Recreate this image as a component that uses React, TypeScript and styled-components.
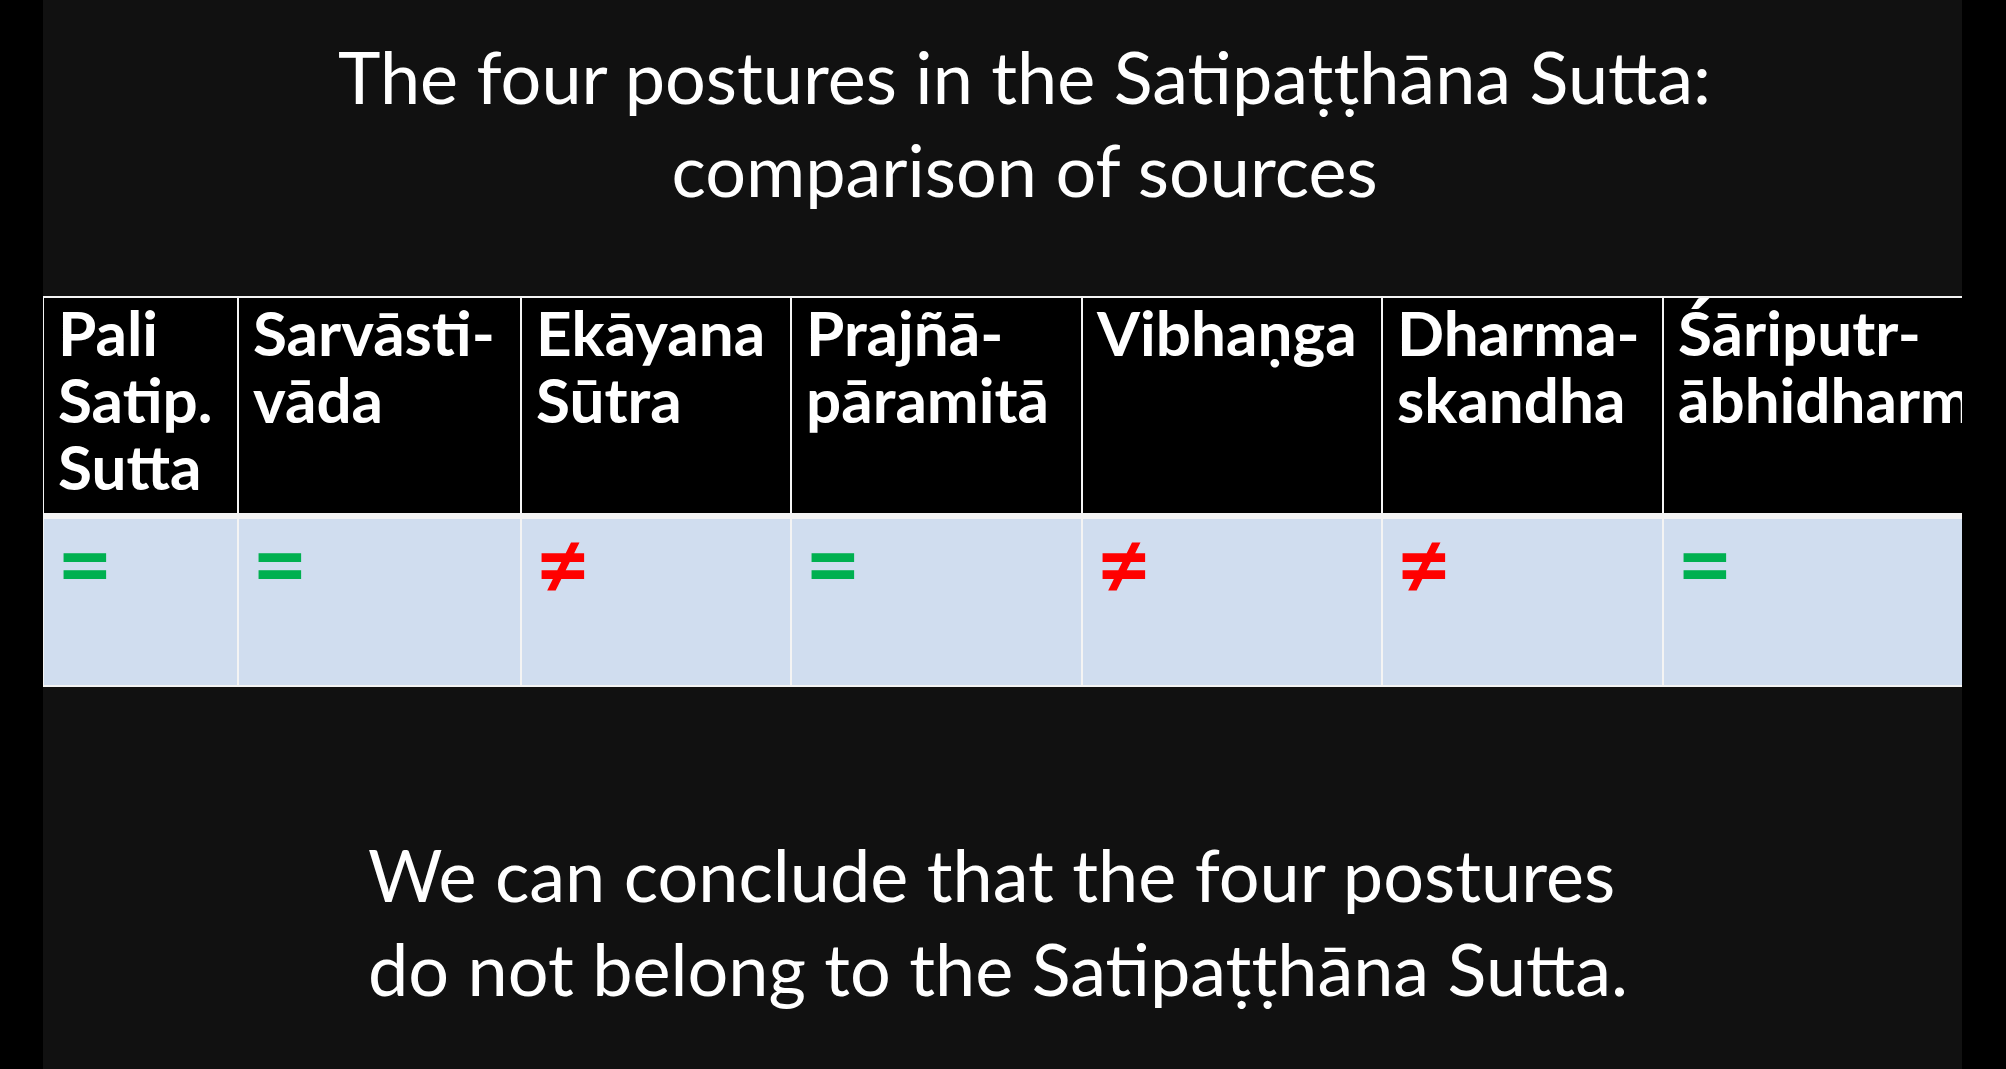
import React from "react";
import styled, { createGlobalStyle } from "styled-components";

const GlobalStyle = createGlobalStyle`
  html, body {
    margin: 0;
    padding: 0;
    background: #000000;
  }
  body {
    font-family: "Lato", "Liberation Sans", sans-serif;
  }
`;

const Screen = styled.div`
  display: flex;
  justify-content: flex-start;
  width: 2006px;
  height: 1069px;
  background: #000000;
  padding-left: 43px;
  box-sizing: border-box;
  overflow: hidden;
`;

const Slide = styled.main`
  display: flex;
  flex-direction: column;
  width: 1919px;
  height: 1069px;
  background: #111111;
  overflow: hidden;
  color: #ffffff;
`;

const Title = styled.h1`
  margin: 0;
  padding: 30px 0 0 44px;
  font-family: "Lato", "Liberation Sans", sans-serif;
  font-weight: 400;
  font-size: 72px;
  line-height: 93px;
  text-align: center;
  color: #ffffff;
`;

const Table = styled.div`
  display: grid;
  grid-template-columns: 193px 281px 268px 289px 298px 279px 340px;
  column-gap: 2px;
  row-gap: 6px;
  width: max-content;
  margin-top: 80px;
  padding: 2px 0 2px 1px;
  background: #f4f4f4;
`;

const HeadCell = styled.div`
  background: #000000;
  height: 215px;
  padding: 1px 10px 0 14px;
  box-sizing: border-box;
  font-family: "Lato", "Liberation Sans", sans-serif;
  font-weight: 700;
  font-size: 62px;
  line-height: 67px;
  color: #ffffff;
  white-space: nowrap;
`;

const BodyCell = styled.div`
  background: #d0ddef;
  height: 166px;
  padding: 8px 12px 0 13px;
  box-sizing: border-box;
`;

const Mark = styled.span<{ $same: boolean }>`
  display: inline-block;
  font-family: "Lato", "Liberation Sans", sans-serif;
  font-weight: 700;
  font-size: 96px;
  line-height: 67px;
  color: ${(p) => (p.$same ? "#00b050" : "#ff0000")};
`;

const Conclusion = styled.p`
  margin: 140px 0 0 0;
  padding-left: 325px;
  font-family: "Lato", "Liberation Sans", sans-serif;
  font-weight: 400;
  font-size: 72px;
  line-height: 94px;
  text-align: left;
  color: #ffffff;
`;

const columns: { lines: string[]; same: boolean }[] = [
  { lines: ["Pali", "Satip.", "Sutta"], same: true },
  { lines: ["Sarvāsti-", "vāda"], same: true },
  { lines: ["Ekāyana", "Sūtra"], same: false },
  { lines: ["Prajñā-", "pāramitā"], same: true },
  { lines: ["Vibhaṇga"], same: false },
  { lines: ["Dharma-", "skandha"], same: false },
  { lines: ["Śāriputr-", "ābhidharma"], same: true },
];

export default function App() {
  return (
    <>
      <GlobalStyle />
      <Screen>
        <Slide>
          <Title>
            The four postures in the Satipaṭṭhāna Sutta:
            <br />
            comparison of sources
          </Title>
          <Table>
            {columns.map((c, i) => (
              <HeadCell key={`h${i}`}>
                {c.lines.map((l, j) => (
                  <React.Fragment key={j}>
                    {j > 0 && <br />}
                    {l}
                  </React.Fragment>
                ))}
              </HeadCell>
            ))}
            {columns.map((c, i) => (
              <BodyCell key={`b${i}`}>
                <Mark $same={c.same}>{c.same ? "=" : "≠"}</Mark>
              </BodyCell>
            ))}
          </Table>
          <Conclusion>
            We can conclude that the four postures
            <br />
            do not belong to the Satipaṭṭhāna Sutta.
          </Conclusion>
        </Slide>
      </Screen>
    </>
  );
}
